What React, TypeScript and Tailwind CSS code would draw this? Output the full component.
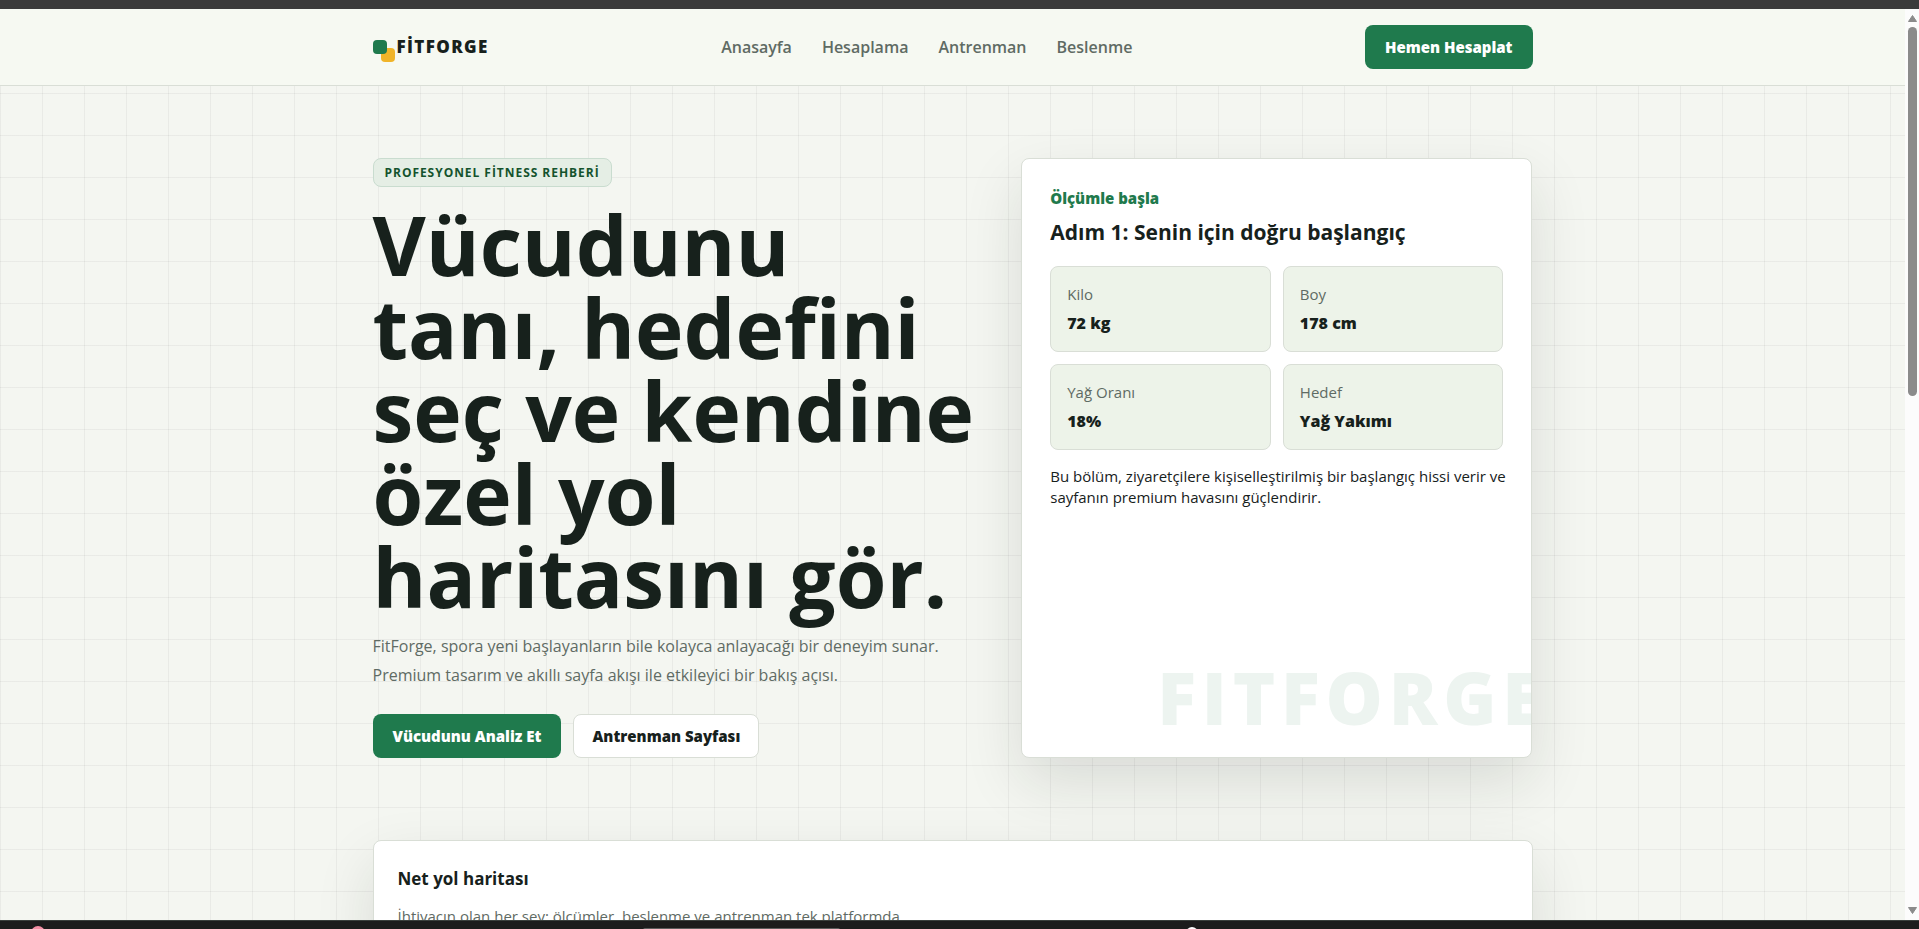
const navLinks = [
    { label: 'Anasayfa', href: '#anasayfa' },
    { label: 'Hesaplama', href: '#hesaplama' },
    { label: 'Antrenman', href: '#antrenman' },
    { label: 'Beslenme', href: '#beslenme' },
];

const metrics = [
    { label: 'Kilo', value: '72 kg' },
    { label: 'Boy', value: '178 cm' },
    { label: 'Yağ Oranı', value: '18%' },
    { label: 'Hedef', value: 'Yağ Yakımı' },
];

function Logo() {
    return (
        <svg width="22" height="30" viewBox="0 0 22 30" aria-hidden="true">
            <rect x="8" y="16" width="14" height="14" rx="4" fill="#f0b429" />
            <rect y="8" width="14" height="14" rx="4" fill="#1f7a4d" />
        </svg>
    );
}

function Header() {
    return (
        <header className="border-b border-[#d9ded6] bg-[#f6f9f2]">
            <div className="mx-auto flex max-w-[1160px] items-center justify-between py-4">
                <a href="#anasayfa" className="flex items-center gap-[2px]">
                    <Logo />
                    <span className="text-[17px] font-extrabold uppercase tracking-[0.08em]">FitForge</span>
                </a>
                <nav className="flex gap-[30px] text-base font-semibold text-[#5f6b64]">
                    {navLinks.map((link) => (
                        <a key={link.href} href={link.href}>
                            {link.label}
                        </a>
                    ))}
                </nav>
                <button className="h-11 rounded-lg bg-[#1f7a4d] px-5 text-[15px] font-extrabold text-white">
                    Hemen Hesaplat
                </button>
            </div>
        </header>
    );
}

function Hero() {
    return (
        <section className="mx-auto grid max-w-[1160px] grid-cols-[1.175fr_1fr] gap-12 pt-18">
            <div className="flex flex-col items-start">
                <span className="rounded-lg border border-[#c9dccf] bg-[#e5eee5] px-[11px] py-1 text-xs leading-[19px] font-bold uppercase tracking-[0.08em] text-[#14532d]">
                    Profesyonel Fitness Rehberi
                </span>
                <h1 className="-mr-3 mt-4 text-[82px] leading-[83px] font-bold">
                    Vücudunu tanı, hedefini seç ve kendine özel yol haritasını gör.
                </h1>
                <p className="mt-[14px] text-base leading-[29px] text-[#5f6b64]">
                    FitForge, spora yeni başlayanların bile kolayca anlayacağı bir deneyim sunar. Premium
                    tasarım ve akıllı sayfa akışı ile etkileyici bir bakış açısı.
                </p>
                <div className="mt-6 flex gap-3 text-[15px] font-extrabold">
                    <button className="h-11 rounded-lg bg-[#1f7a4d] px-5 text-white">
                        Vücudunu Analiz Et
                    </button>
                    <button className="h-11 rounded-lg border border-[#d9ded6] bg-white px-[18px]">
                        Antrenman Sayfası
                    </button>
                </div>
            </div>

            <div className="relative overflow-hidden rounded-lg border border-[#d9ded6] bg-white p-7 shadow-[0_24px_60px_rgba(23,33,28,0.12)]">
                <p className="text-[15px] leading-[23px] font-extrabold text-[#1f7a4d]">Ölçümle başla</p>
                <h2 className="mt-2 text-[21px] leading-7 font-bold">Adım 1: Senin için doğru başlangıç</h2>
                <div className="mt-5 grid grid-cols-2 gap-3">
                    {metrics.map((metric) => (
                        <div
                            key={metric.label}
                            className="rounded-lg border border-[#d9ded6] bg-[#edf3e9] p-4"
                        >
                            <div className="text-[15px] leading-[22px] text-[#5f6b64]">{metric.label}</div>
                            <div className="mt-[6px] text-base leading-6 font-extrabold">{metric.value}</div>
                        </div>
                    ))}
                </div>
                <p className="-mr-2 mt-4 text-[15px] leading-[21px]">
                    Bu bölüm, ziyaretçilere kişiselleştirilmiş bir başlangıç hissi verir ve sayfanın premium
                    havasını güçlendirir.
                </p>
                <span
                    aria-hidden="true"
                    className="absolute -right-4 bottom-6 text-7xl font-extrabold tracking-[0.08em] text-[#edf4f0]"
                >
                    FITFORGE
                </span>
            </div>
        </section>
    );
}

function Roadmap() {
    return (
        <section className="mx-auto mt-[82px] max-w-[1160px] rounded-lg border border-[#d9ded6] bg-white p-6 shadow-[0_24px_60px_rgba(23,33,28,0.12)]">
            <h3 className="text-[17px] leading-[27px] font-bold">Net yol haritası</h3>
            <p className="mt-3 text-[15px] leading-6 text-[#5f6b64]">
                İhtiyacın olan her şey: ölçümler, beslenme ve antrenman tek platformda.
            </p>
        </section>
    );
}

function Scrollbar() {
    return (
        <div className="flex w-[14px] shrink-0 flex-col items-center bg-[#fcfcfc] py-[6px]">
            <svg width="9" height="7" viewBox="0 0 9 7" aria-hidden="true">
                <path d="M4.5 0.5 8.5 6.5H0.5Z" fill="#8b8b8b" stroke="#8b8b8b" strokeLinejoin="round" />
            </svg>
            <div className="mt-[5px] h-[41%] w-[9px] rounded-full bg-[#8b8b8b]" />
            <svg className="mt-auto" width="9" height="7" viewBox="0 0 9 7" aria-hidden="true">
                <path d="M4.5 6.5 8.5 0.5H0.5Z" fill="#8b8b8b" stroke="#8b8b8b" strokeLinejoin="round" />
            </svg>
        </div>
    );
}

export default function App() {
    return (
        <div
            lang="tr"
            className="flex h-screen flex-col overflow-hidden font-['Open_Sans','Noto_Sans',sans-serif] text-[#17211c]"
        >
            <div className="h-[9px] shrink-0 bg-[#3b3b3b]" />
            <div className="flex min-h-0 flex-1">
                <main className="min-w-0 flex-1 overflow-hidden bg-[#f4f6f1] bg-[linear-gradient(rgba(23,33,28,0.05)_1px,transparent_1px),linear-gradient(90deg,rgba(23,33,28,0.05)_1px,transparent_1px)] bg-size-[42px_42px]">
                    <Header />
                    <Hero />
                    <Roadmap />
                </main>
                <Scrollbar />
            </div>
            {/* Taskbar edge */}
            <div className="relative h-[9px] shrink-0 overflow-hidden border-t border-[#3a3f3c] bg-[#1c1c1c]">
                <div className="absolute top-[5px] left-[31px] size-[14px] rounded-full bg-[#f48fa5]" />
                <div className="absolute top-[7px] left-[643px] h-1 w-[197px] rounded-full bg-[#5c5c5c]" />
                <div className="absolute top-[6px] left-[1186px] size-3 rounded-full bg-white" />
            </div>
        </div>
    );
}
